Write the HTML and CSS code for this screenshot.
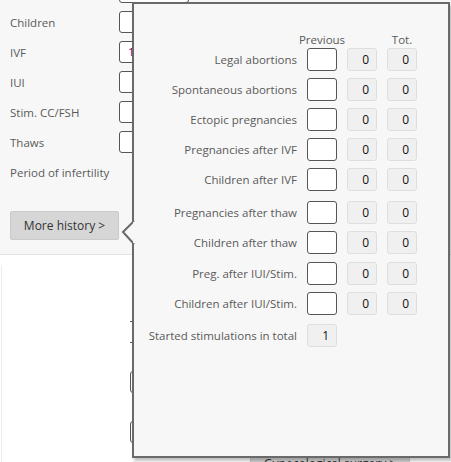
FILE: index.html
```html
<!DOCTYPE html>
<html>
<head>
<meta charset="utf-8">
<link rel="stylesheet" href="styles.css">
</head>
<body>
<div class="page">
  <div class="panel">
    <div class="frow first"><span class="flabel">Pregnancies</span><span class="finput"></span></div>
    <div class="frow"><span class="flabel">Children</span><span class="finput"></span></div>
    <div class="frow"><span class="flabel">IVF</span><span class="finput val">1</span></div>
    <div class="frow"><span class="flabel">IUI</span><span class="finput"></span></div>
    <div class="frow"><span class="flabel">Stim. CC/FSH</span><span class="finput"></span></div>
    <div class="frow"><span class="flabel">Thaws</span><span class="finput"></span></div>
    <div class="frow"><span class="flabel">Period of infertility</span></div>
    <button class="btn more">More history &gt;</button>
  </div>
  <div class="lower">
    <div class="lrow flat"></div>
    <div class="lrow"><span class="linput"></span></div>
    <div class="lrow"><span class="linput"></span></div>
    <button class="btn gyn">Gynecological surgery &gt;</button>
  </div>
</div>

<div class="pop">
  <div class="arrow">
    <svg width="14" height="26" viewBox="0 0 14 26"><path d="M13 1 L2 12 L13 24" fill="#f7f7f7" stroke="#6a6a6a" stroke-width="2"/><rect x="12" y="2" width="3" height="21" fill="#f7f7f7"/></svg>
  </div>
  <div class="prow hdr"><span></span><span class="h">Previous</span><span></span><span class="h">Tot.</span></div>
  <div class="prow"><span class="plabel">Legal abortions</span><span class="box edit"></span><span class="box ro">0</span><span class="box ro">0</span></div>
  <div class="prow"><span class="plabel">Spontaneous abortions</span><span class="box edit"></span><span class="box ro">0</span><span class="box ro">0</span></div>
  <div class="prow"><span class="plabel">Ectopic pregnancies</span><span class="box edit"></span><span class="box ro">0</span><span class="box ro">0</span></div>
  <div class="prow"><span class="plabel">Pregnancies after IVF</span><span class="box edit"></span><span class="box ro">0</span><span class="box ro">0</span></div>
  <div class="prow"><span class="plabel">Children after IVF</span><span class="box edit"></span><span class="box ro">0</span><span class="box ro">0</span></div>
  <div class="prow g3"><span class="plabel">Pregnancies after thaw</span><span class="box edit"></span><span class="box ro">0</span><span class="box ro">0</span></div>
  <div class="prow"><span class="plabel">Children after thaw</span><span class="box edit"></span><span class="box ro">0</span><span class="box ro">0</span></div>
  <div class="prow g1"><span class="plabel">Preg. after IUI/Stim.</span><span class="box edit"></span><span class="box ro">0</span><span class="box ro">0</span></div>
  <div class="prow"><span class="plabel">Children after IUI/Stim.</span><span class="box edit"></span><span class="box ro">0</span><span class="box ro">0</span></div>
  <div class="prow g2"><span class="plabel">Started stimulations in total</span><span class="box ro">1</span><span></span><span></span></div>
</div>
</body>
</html>
```

FILE: styles.css
```css
* { box-sizing: border-box; }
html, body { margin: 0; padding: 0; }
body {
  width: 451px;
  height: 462px;
  overflow: hidden;
  background: #ffffff;
  font-family: "Open Sans", "Noto Sans", sans-serif;
  font-size: 11.5px;
  color: #5a5a5a;
  position: relative;
}
.page { width: 451px; }
.panel {
  background: #f7f7f7;
  border-bottom: 1px solid #e2e2e2;
  padding: 0 0 10px 10px;
  display: flex;
  flex-direction: column;
  gap: 8px;
  height: 255px;
}
.frow {
  display: flex;
  align-items: center;
  height: 22px;
  flex-shrink: 0;
}
.frow.first { margin-top: -19px; }
.flabel { width: 109px; white-space: nowrap; }
.finput {
  width: 70px;
  height: 22px;
  background: #fff;
  border: 1px solid #555;
  border-radius: 3px;
  padding-left: 8px;
  line-height: 20px;
  color: #6b0a6b;
}
.btn {
  font-family: inherit;
  font-size: 12px;
  color: #333;
  background: #d6d6d6;
  border: 1px solid #cacaca;
  border-radius: 2px;
  height: 29px;
  padding: 0;
  flex-shrink: 0;
}
.more { width: 109px; margin-top: 20px; }
.lower {
  margin-top: 10px;
  margin-left: 1px;
  border-left: 1px solid #ececec;
  padding-top: 56px;
  display: flex;
  flex-direction: column;
  gap: 28px;
}
.lrow { height: 22px; padding-left: 128px; flex-shrink: 0; }
.lrow.flat { border-top: 1px solid #555; border-bottom: 1px solid #555; margin-left: 128px; padding-left: 0; width: 60px; }
.linput {
  display: block;
  width: 60px;
  height: 22px;
  border: 1px solid #555;
  border-radius: 3px;
}
.gyn { width: 160px; margin-left: 248px; margin-top: -22px; }

.pop {
  position: absolute;
  left: 132px;
  top: 2px;
  width: 318px;
  height: 456px;
  background: #f7f7f7;
  border: 2px solid #6a6a6a;
  box-shadow: 2px 3px 3px rgba(0,0,0,0.25);
  padding: 28px 31px 0 0;
  display: flex;
  flex-direction: column;
  gap: 7px;
  z-index: 2;
}
.arrow {
  position: absolute;
  left: -13px;
  top: 216px;
  width: 14px;
  height: 26px;
}
.arrow svg { display: block; }
.prow {
  display: grid;
  grid-template-columns: 1fr 30px 30px 30px;
  column-gap: 10px;
  align-items: center;
  height: 23px;
  flex-shrink: 0;
}
.prow.hdr { height: 16px; margin-bottom: -7px; line-height: 16px; }
.h { justify-self: center; white-space: nowrap; font-size: 11.5px; }
.prow.g3 { margin-top: 3px; }
.prow.g1 { margin-top: 1px; }
.prow.g2 { margin-top: 2px; }
.plabel { text-align: right; white-space: nowrap; }
.box {
  height: 23px;
  border-radius: 3px;
  line-height: 21px;
}
.edit { background: #fff; border: 1px solid #555; }
.ro {
  background: #f0f0f0;
  border: 1px solid #dedede;
  text-align: right;
  padding-right: 7px;
  color: #111;
  font-size: 12px;
}
```
